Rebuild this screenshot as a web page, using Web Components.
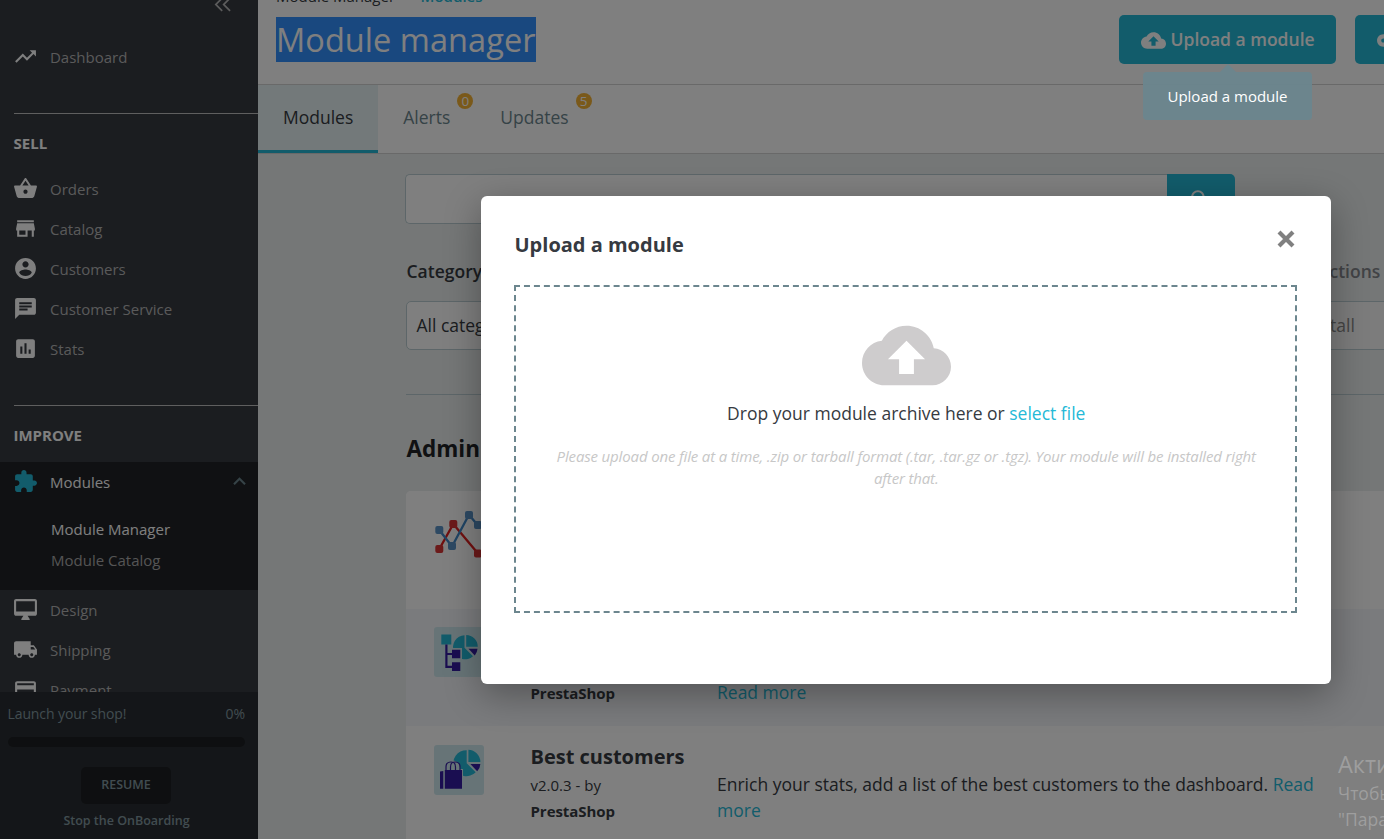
<!DOCTYPE html>
<html lang="en">
<head>
<meta charset="utf-8">
<title>Module manager</title>
<style>
html,body{margin:0;height:100%;overflow:hidden;background:#fff}
body{font-family:"Open Sans","Noto Sans",sans-serif;color:#363a41}
</style>
</head>
<body>
<back-office></back-office>
<script>
const ICONS={
trending:'M16 6l2.29 2.29-4.88 4.88-4-4L2 16.59 3.41 18l6-6 4 4 6.3-6.29L22 12V6z',
basket:'M17.21 9l-4.38-6.56c-.19-.28-.51-.42-.83-.42-.32 0-.64.14-.83.43L6.79 9H2c-.55 0-1 .45-1 1 0 .09.01.18.04.27l2.54 9.27c.23.84 1 1.46 1.92 1.46h13c.92 0 1.69-.62 1.93-1.46l2.54-9.27L23 10c0-.55-.45-1-1-1h-4.79zM9 9l3-4.4L15 9H9zm3 8c-1.1 0-2-.9-2-2s.9-2 2-2 2 .9 2 2-.9 2-2 2z',
store:'M20 4H4v2h16V4zm1 10v-2l-1-5H4l-1 5v2h1v6h10v-6h4v6h2v-6h1zm-9 4H6v-4h6v4z',
account:'M12 2C6.48 2 2 6.48 2 12s4.48 10 10 10 10-4.48 10-10S17.52 2 12 2zm0 3c1.66 0 3 1.34 3 3s-1.34 3-3 3-3-1.34-3-3 1.34-3 3-3zm0 14.2c-2.5 0-4.71-1.28-6-3.22.03-1.99 4-3.08 6-3.08 1.99 0 5.97 1.09 6 3.08-1.29 1.94-3.5 3.22-6 3.22z',
chat:'M20 2H4c-1.1 0-1.99.9-1.99 2L2 22l4-4h14c1.1 0 2-.9 2-2V4c0-1.1-.9-2-2-2zM6 9h12v2H6V9zm8 5H6v-2h8v2zm4-6H6V6h12v2z',
stats:'M19 3H5c-1.1 0-2 .9-2 2v14c0 1.1.9 2 2 2h14c1.1 0 2-.9 2-2V5c0-1.1-.9-2-2-2zM9 17H7v-7h2v7zm4 0h-2V7h2v10zm4 0h-2v-4h2v4z',
extension:'M20.5 11H19V7c0-1.1-.9-2-2-2h-4V3.5C13 2.12 11.88 1 10.5 1S8 2.12 8 3.5V5H4c-1.1 0-1.99.9-1.99 2v3.8H3.5c1.49 0 2.7 1.21 2.7 2.7s-1.21 2.7-2.7 2.7H2V20c0 1.1.9 2 2 2h3.8v-1.5c0-1.49 1.21-2.7 2.7-2.7 1.49 0 2.7 1.21 2.7 2.7V22H17c1.1 0 2-.9 2-2v-4h1.5c1.38 0 2.5-1.12 2.5-2.5S21.88 11 20.5 11z',
desktop:'M21 2H3c-1.1 0-2 .9-2 2v12c0 1.1.9 2 2 2h7l-2 3v1h8v-1l-2-3h7c1.1 0 2-.9 2-2V4c0-1.1-.9-2-2-2zm0 12H3V4h18v10z',
truck:'M20 8h-3V4H3c-1.1 0-2 .9-2 2v11h2c0 1.66 1.34 3 3 3s3-1.34 3-3h6c0 1.66 1.34 3 3 3s3-1.34 3-3h2v-5l-3-4zM6 18.5c-.83 0-1.5-.67-1.5-1.5s.67-1.5 1.5-1.5 1.5.67 1.5 1.5-.67 1.5-1.5 1.5zm13.5-9l1.96 2.5H17V9.5h2.5zm-1.5 9c-.83 0-1.5-.67-1.5-1.5s.67-1.5 1.5-1.5 1.5.67 1.5 1.5-.67 1.5-1.5 1.5z',
payment:'M20 4H4c-1.11 0-1.99.89-1.99 2L2 18c0 1.11.89 2 2 2h16c1.11 0 2-.89 2-2V6c0-1.11-.89-2-2-2zm0 14H4v-6h16v6zm0-10H4V6h16v2z',
cloud:'M19.35 10.04C18.67 6.59 15.64 4 12 4 9.11 4 6.6 5.64 5.35 8.04 2.34 8.36 0 10.91 0 14c0 3.31 2.69 6 6 6h13c2.76 0 5-2.24 5-5 0-2.64-2.05-4.78-4.65-4.96zM14 13v4h-4v-4H7l5-5 5 5h-3z',
key:'M12.65 10C11.83 7.67 9.61 6 7 6c-3.31 0-6 2.69-6 6s2.69 6 6 6c2.61 0 4.83-1.67 5.65-4H17v4h4v-4h2v-4H12.65zM7 14c-1.1 0-2-.9-2-2s.9-2 2-2 2 .9 2 2-.9 2-2 2z',
search:'M15.5 14h-.79l-.28-.27C15.41 12.59 16 11.11 16 9.5 16 5.91 13.09 3 9.5 3S3 5.91 3 9.5 5.91 16 9.5 16c1.61 0 3.09-.59 4.23-1.57l.27.28v.79l5 4.99L20.49 19l-4.99-5zm-6 0C7.01 14 5 11.99 5 9.5S7.01 5 9.5 5 14 7.01 14 9.5 11.99 14 9.5 14z',
up:'M12 8l-6 6 1.41 1.41L12 10.83l4.59 4.58L18 14z',
collapse:'M11.2 5.4L9.8 4 1.8 12l8 8 1.4-1.4L4.6 12zM20.2 5.4L18.8 4l-8 8 8 8 1.4-1.4L13.6 12z'
};
const define=(name,html)=>customElements.define(name,class extends HTMLElement{
  constructor(){super();this.attachShadow({mode:'open'});}
  connectedCallback(){this.shadowRoot.innerHTML=typeof html==='function'?html(this):html;}
});

define('md-icon',el=>`<style>:host{display:block;flex:none;width:25px;height:25px}svg{display:block;width:100%;height:100%}</style>
<svg viewBox="0 0 24 24" fill="currentColor"><path d="${ICONS[el.getAttribute('name')]}"/></svg>`);

define('menu-item',el=>`<style>
:host{display:flex;align-items:center;height:40px;padding-left:13.4px;font-size:15px;color:#b4b4b4}
md-icon{color:#fff;margin:0 11.6px .2px 0}
:host([active]) md-icon{color:#25b9d7}
:host([active]){color:#fff}
.up{margin-left:auto;margin-right:6px;color:#6c868e!important}
</style><md-icon name="${el.getAttribute('icon')}"></md-icon><slot></slot>${el.hasAttribute('active')?'<md-icon class="up" name="up"></md-icon>':''}`);

define('menu-title',`<style>
:host{display:flex;align-items:center;box-sizing:border-box;height:56px;margin-left:13.5px;padding-top:2px;border-top:1px solid #bebebe;font-size:15px;font-weight:700;color:#fff}
</style><slot></slot>`);

define('side-bar',`<style>
:host{display:flex;flex-direction:column;width:258px;flex:none;height:839px;background:#363a41;color:#bebebe}
.scroll{height:692px;overflow:hidden;display:flex;flex-direction:column;flex:none}
.scroll>*{flex-shrink:0}
.top{height:37px;display:flex;justify-content:flex-end;padding-right:24px}
.top md-icon{width:21px;height:21px;margin-top:-6px;color:#b8b8b8}
.gap{height:36px}
.open{background:#202226;height:128px;box-sizing:border-box;font-size:15px;margin-top:1px}
.sub{padding:12px 0 0 51px;line-height:31px;color:#aaa}
.sub b{display:block;font-weight:400;color:#fff}
.foot{flex:1;background:#292d33;color:#8399a0;padding:12px 13px 0 8px;display:flex;flex-direction:column;font-size:14px}
.row{display:flex;justify-content:space-between;line-height:19px}
.row span:first-child{margin-left:-.5px;letter-spacing:-.1px}
.bar{height:10px;border-radius:5px;background:#1d1f22;margin-top:14px}
.resume{align-self:center;margin:20px 1px 0 0;width:90px;height:37px;line-height:35px;text-align:center;font-size:12.5px;font-weight:600;background:#1d1f22;border-radius:5px}
.stop{text-align:center;font-weight:600;font-size:12.5px;line-height:18px;margin-top:8px}
</style>
<div class="scroll">
<div class="top"><md-icon name="collapse"></md-icon></div>
<menu-item icon="trending">Dashboard</menu-item><div class="gap"></div>
<menu-title>SELL</menu-title>
<menu-item icon="basket">Orders</menu-item><menu-item icon="store">Catalog</menu-item><menu-item icon="account">Customers</menu-item><menu-item icon="chat">Customer Service</menu-item><menu-item icon="stats">Stats</menu-item>
<div class="gap"></div>
<menu-title>IMPROVE</menu-title>
<div class="open"><menu-item icon="extension" active>Modules</menu-item><div class="sub"><b>Module Manager</b>Module Catalog</div></div>
<menu-item icon="desktop">Design</menu-item><menu-item icon="truck">Shipping</menu-item><menu-item icon="payment">Payment</menu-item>
</div>
<div class="foot"><div class="row"><span>Launch your shop!</span><span>0%</span></div><div class="bar"></div><div class="resume">RESUME</div><div class="stop">Stop the OnBoarding</div></div>`);

define('action-button',el=>`<style>
:host{display:flex;align-items:center;flex:none;box-sizing:border-box;height:49px;padding:0 21px 1px 22px;border-radius:5px;background:#25b9d7;color:#fff;font-size:17.5px;font-weight:600;white-space:nowrap}
md-icon{margin:2px 4.5px 0 0}
</style><md-icon name="${el.getAttribute('icon')}"></md-icon><slot></slot>`);

define('page-header',`<style>
:host{display:flex;flex:none;justify-content:space-between;height:84px;border-bottom:1px solid #d3d3d3;background:#fff}
.left{padding-left:18px;display:flex;flex-direction:column}
.crumb{display:flex;height:17px;font-size:15px;line-height:20px;color:#363a41;white-space:nowrap}
.crumb span{margin-top:-14px}
.crumb .l{color:#25b9d7;font-weight:600;margin-left:25.5px}
h1{margin:0;font-weight:400;font-size:32.5px;line-height:45px;height:45px;width:260px;letter-spacing:.05px;background:#3390ff;color:#fff;white-space:nowrap}
.right{display:flex;gap:19px;padding-top:15px;width:265px;flex:none}
action-button:first-child{width:217px}
action-button:last-child{padding-left:21px}
</style><div class="left"><div class="crumb"><span>Module Manager</span><span class="l">Modules</span></div><h1>Module manager</h1></div>
<div class="right"><action-button icon="cloud">Upload a module</action-button><action-button icon="key"></action-button></div>`);

define('tab-item',el=>`<style>
:host{display:flex;position:relative;align-items:center;box-sizing:border-box;height:68px;padding:0 25px 5px;font-size:17.5px;color:#6c868e}
:host([active]){background:#e6f2f5;color:#363a41;border-bottom:3px solid #25b9d7;padding-bottom:2px}
i{position:absolute;right:2px;top:8px;width:16px;height:16px;border-radius:50%;background:#f5b335;color:#fff;font:400 13.5px/16px "Open Sans",sans-serif;text-align:center}
</style><slot></slot>${el.hasAttribute('count')?`<i>${el.getAttribute('count')}</i>`:''}`);

define('tab-bar',`<style>:host{display:flex;flex:none;height:68px;border-bottom:1px solid #d3d3d3;background:#fff}</style>
<tab-item active>Modules</tab-item><tab-item count="0">Alerts</tab-item><tab-item count="5">Updates</tab-item>`);

define('module-row',el=>`<style>
:host{display:flex;box-sizing:border-box;height:118px;padding:18px 0 0 28px;background:#fff;line-height:26px}
:host([alt]){background:#f4f7fb;height:117px}
.pic{width:50px;flex:none;margin-right:46.5px}
.info{width:186.5px;flex:none}
::slotted(svg){display:block}
</style><div class="pic"><slot name="pic"></slot></div><div class="info"><slot name="info"></slot></div><div><slot name="desc"></slot></div>`);

define('module-list',`<style>
:host{display:block;width:1000px;border-radius:5px 0 0 0;overflow:hidden;background:#fff}
module-row:last-child{padding-top:19px}
[slot=info]{font-size:15px;color:#363a41;line-height:26px}
[slot=info] h3{margin:0;font-size:20px;line-height:24px;font-weight:700;height:27px;white-space:nowrap}
[slot=info] b{display:block;letter-spacing:-.05px}
[slot=desc]{width:610px;font-size:17.5px;margin-top:26px;color:#363a41}
[slot=desc].second{margin-top:52px}
a{color:#25b9d7}
.by{height:53px}
</style>
<module-row><svg slot="pic" width="50" height="50" viewBox="0 0 50 50">
<g fill="none" stroke-width="2.3"><path stroke="#e02020" d="M5.3 40L19.3 15 44 44.5"/><path stroke="#4089c9" d="M5.3 21L18 37.5 35 5.8 44 16.5"/></g>
<g fill="#d83434"><rect x="1.3" y="36" width="8" height="8" rx="2"/><rect x="15.3" y="11" width="8" height="8" rx="2"/><rect x="40" y="40.5" width="8" height="8" rx="2"/></g>
<g fill="#5a93c6"><rect x="1.3" y="17" width="8" height="8" rx="2"/><rect x="14" y="33" width="8" height="8" rx="2"/><rect x="31" y="2" width="8" height="8" rx="2"/><rect x="40" y="12" width="8" height="8" rx="2"/></g></svg></module-row>
<module-row alt><svg slot="pic" width="50" height="50" viewBox="0 0 50 50"><rect width="50" height="50" rx="3" fill="#cfe9ee"/>
<path fill="#25b9d7" d="M7.3 7.5h10v10h-10zM30.5 8.3v12.4l8.5 8.5A12 12 0 1 1 30.5 8.3zM32.2 8v11.8h11.6A11.8 11.8 0 0 0 32.2 8z"/><path fill="#351da3" d="M34.5 21.8h9q-.3 4-2.7 6.8z"/>
<path fill="none" stroke="#cfe9ee" stroke-width="2" d="M17 22h10v10H17z"/><path fill="#351da3" d="M11.3 17.5h2.2v8.4H18v-3.2h8.3v8.6H18v-3.2h-4.5v10.6H18v-3.4h8.3V44H18v-3.1h-6.7z"/></svg>
<div slot="info"><div class="by"></div><b>PrestaShop</b></div><div slot="desc" class="second"><a>Read more</a></div></module-row>
<module-row><svg slot="pic" width="50" height="50" viewBox="0 0 50 50"><rect width="50" height="50" rx="3" fill="#cfe9ee"/>
<path fill="#25b9d7" d="M32.7 5.2v13l9 9A13 13 0 1 1 32.7 5.2zM34.4 4.8v12.3h12A12.3 12.3 0 0 0 34.4 4.8z"/><path fill="#351da3" d="M36.4 19h10q-.3 4.2-3.2 7.2z"/>
<path fill="#cfe9ee" d="M9.6 24.5L12 18q5-5 11-1 4 3 3 7h3v11H10z"/><path fill="#351da3" d="M10.8 25h17.2v18.7H10.8zM6 26.5L9.3 26v17.7H6z"/><path fill="none" stroke="#351da3" stroke-width="1.2" d="M12 25v-3q0-5 5-5 4.5 0 4.5 5v3M16.5 25v-3q0-5 4.5-5 5 0 5 5v3"/></svg>
<div slot="info"><h3>Best customers</h3>v2.0.3 - by<b>PrestaShop</b></div><div slot="desc">Enrich your stats, add a list of the best customers to the dashboard. <a>Read more</a></div></module-row>`);

define('page-content',`<style>
:host{display:flex;flex-direction:column;flex:1;background:#eaefef;padding:20px 0 0 148px;white-space:nowrap}
.search{display:flex;width:830px;height:50px;margin-left:-1px;flex:none}
.in{flex:1;background:#fff;border:1px solid #bbcdd2;border-right:0;border-radius:5px 0 0 5px}
.btn{width:68px;background:#25b9d7;border-radius:0 5px 5px 0;color:#fff;display:flex;align-items:center;justify-content:center}
.btn md-icon{margin-right:1px}
.filters{display:flex;justify-content:space-between;margin-top:35px;width:1000px;font-size:17.5px;flex:none}
.f{width:330px}
.f b{display:block;font-weight:600;line-height:24px;height:42px;text-indent:.5px}
.sel{box-sizing:border-box;height:49px;line-height:47px;border:1px solid #bbcdd2;border-radius:5px;background:#fff;padding-left:9.5px}
.off{color:#888}.f.off b{color:#84878c}.off .sel{background:#f8f8f8}
.f.off{width:260px}.off b,.off .sel{padding-left:183px}
hr{width:1000px;border:0;border-top:1px solid #bbcdd2;margin:44px 0 0;flex:none}
h2{flex:none;font-size:22.5px;font-weight:700;line-height:30px;margin:39px 0 27px;color:#202226;text-indent:.5px}
module-list{flex:none;white-space:normal}
</style>
<div class="search"><div class="in"></div><div class="btn"><md-icon name="search"></md-icon></div></div>
<div class="filters"><div class="f"><b>Category</b><div class="sel">All categ</div></div><div class="f off"><b>ctions</b><div class="sel">tall</div></div></div>
<hr><h2>Admin</h2><module-list></module-list>`);

define('upload-modal',`<style>
:host{position:absolute;left:481px;top:196px;width:850px;height:488px;box-sizing:border-box;background:#fff;border-radius:6px;box-shadow:0 10px 37px rgba(0,0,0,.33);padding:33px 34px 0 33px;display:flex;flex-direction:column}
header{display:flex;justify-content:space-between;height:56px;font-size:20px;font-weight:700;line-height:31px;text-indent:.5px}
header svg{width:18px;height:18px;margin:1px 2px 0 0}
.drop{box-sizing:border-box;height:328px;border:2px dashed #6c868e;text-align:center;display:flex;flex-direction:column;align-items:center;padding:23.5px 0 0 1.5px}
md-icon{width:89px;height:89px;color:#cecccd}
p{margin:1.5px 0 0;font-size:17.5px;line-height:24px}
a{color:#25b9d7}
small{display:block;width:710px;margin-top:20px;font-size:15px;line-height:22px;font-style:italic;letter-spacing:-.15px;color:#c7c7c7}
</style><header><span>Upload a module</span><svg viewBox="0 0 18 18"><path d="M2 2l14 14M16 2L2 16" stroke="#808080" stroke-width="4.2"/></svg></header>
<div class="drop"><md-icon name="cloud"></md-icon><p>Drop your module archive here or <a>select file</a></p><small>Please upload one file at a time, .zip or tarball format (.tar, .tar.gz or .tgz). Your module will be installed right after that.</small></div>`);

define('tool-tip',`<style>
:host{position:absolute;left:1143px;top:72px;width:169px;height:48px;line-height:49px;border-radius:4px;background:rgba(108,134,142,.95);color:#fff;text-align:center;font-size:15px}
:host::before{content:"";position:absolute;left:77px;top:-8px;border:8px solid transparent;border-top:0;border-bottom-color:#6c868ef2}
</style><slot></slot>`);

define('os-watermark',`<style>
:host{position:absolute;left:1338px;top:749px;width:46px;height:90px;overflow:hidden;white-space:nowrap;color:#9e9e9e;font-size:17.5px;line-height:26px}
div{font-size:23.5px;line-height:31px}
</style><div>Акти</div>Чтобы<br>"Пара`);

define('back-office',`<style>
:host{display:flex;position:relative;width:1384px;height:839px;overflow:hidden}
main{flex:1;min-width:0;display:flex;flex-direction:column;overflow:hidden}
.shade{position:absolute;inset:0;background:rgba(0,0,0,.5)}
</style><side-bar></side-bar><main><page-header></page-header><tab-bar></tab-bar><page-content></page-content></main>
<div class="shade"></div><tool-tip>Upload a module</tool-tip><os-watermark></os-watermark><upload-modal></upload-modal>`);
</script>
</body>
</html>
